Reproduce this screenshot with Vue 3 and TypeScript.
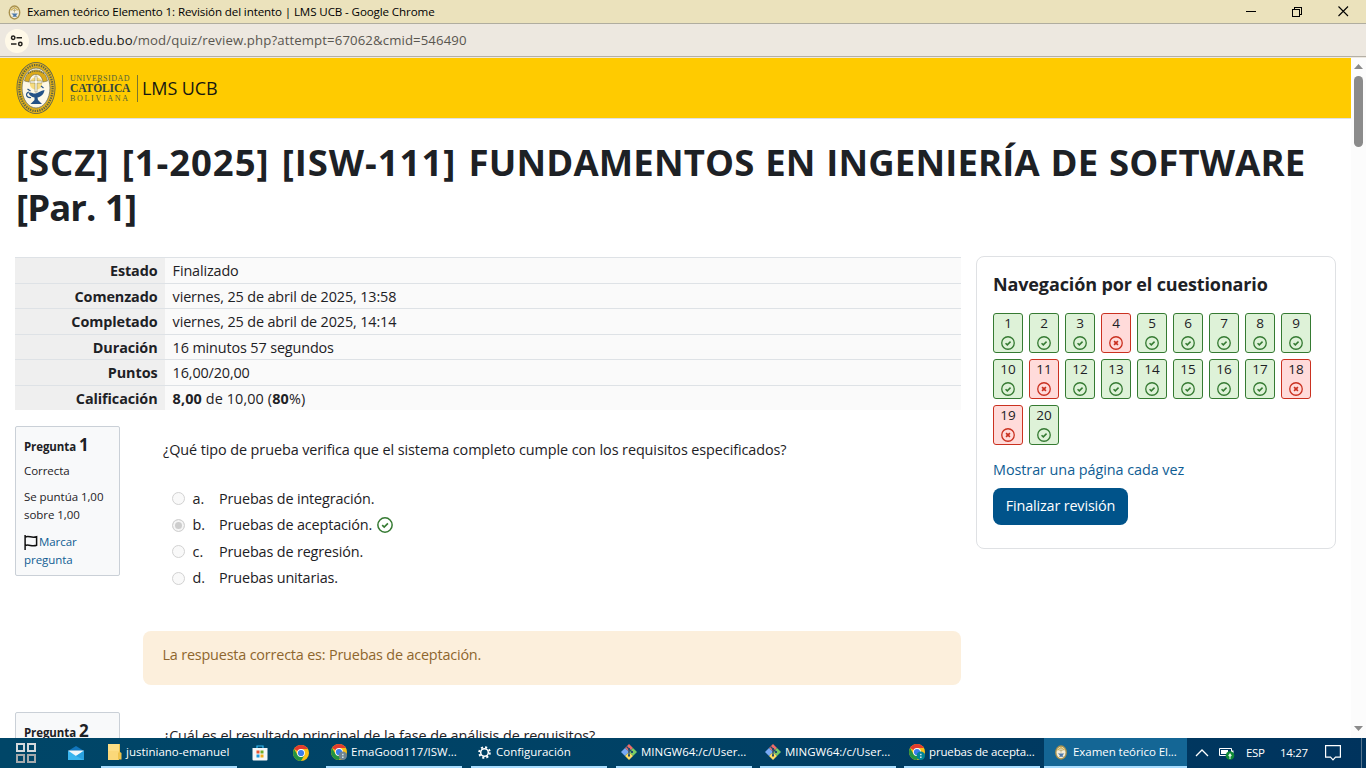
<script setup lang="ts">
interface Row { label: string; value: string; bold?: boolean }
interface Task { kind: string; text?: string }

const rows: Row[] = [
  { label: 'Estado', value: 'Finalizado' },
  { label: 'Comenzado', value: 'viernes, 25 de abril de 2025, 13:58' },
  { label: 'Completado', value: 'viernes, 25 de abril de 2025, 14:14' },
  { label: 'Duración', value: '16 minutos 57 segundos' },
  { label: 'Puntos', value: '16,00/20,00' },
  { label: 'Calificación', value: '', bold: true },
]
const options = [
  { letter: 'a.', text: 'Pruebas de integración.' },
  { letter: 'b.', text: 'Pruebas de aceptación.', checked: true },
  { letter: 'c.', text: 'Pruebas de regresión.' },
  { letter: 'd.', text: 'Pruebas unitarias.' },
]
const wrong = [4, 11, 18, 19]
const tasks: Task[] = [
  { kind: 'view' },
  { kind: 'mail' },
  { kind: 'folder', text: 'justiniano-emanuel' },
  { kind: 'store' },
  { kind: 'chrome' },
  { kind: 'chrome-gray', text: 'EmaGood117/ISW...' },
  { kind: 'gear', text: 'Configuración' },
  { kind: 'git', text: 'MINGW64:/c/User...' },
  { kind: 'git', text: 'MINGW64:/c/User...' },
  { kind: 'chrome-teal', text: 'pruebas de acepta...' },
  { kind: 'seal', text: 'Examen teórico El...' },
]
</script>

<template>
  <div class="screen">
    <svg class="defs" width="0" height="0" aria-hidden="true">
      <symbol id="seal" viewBox="0 0 40 54">
        <ellipse cx="20" cy="27" rx="19.5" ry="26" fill="#596052" />
        <ellipse cx="20" cy="27" rx="18.7" ry="25.2" fill="#e0b01c" />
        <ellipse cx="20" cy="27" rx="16.6" ry="23" fill="none" stroke="#5d6340" stroke-width="2.2" stroke-dasharray="1.3 1.1" />
        <ellipse cx="20" cy="27" rx="14" ry="20" fill="#fdf8e6" stroke="#6c7059" stroke-width=".8" />
        <path d="M8.500 20c1-7 5.500-11 11.500-11s10.500 4 11.500 11l-4.500 1c-1-5-3-7.500-7-7.500s-6 2.500-7 7.500z" fill="#dba91b" stroke="#6b6a49" stroke-width=".6" />
        <path d="M12 12.500c5-3 11-3 16 0" fill="none" stroke="#57614f" stroke-width="1.200" stroke-dasharray="1.200 1" />
        <circle cx="20" cy="22.500" r="6.200" fill="#f8dd80" />
        <path d="M19 15h2v5h5v2h-5v9h-2v-9h-5v-2h5z" fill="#fffdf2" stroke="#7d7a55" stroke-width=".5" />
        <path d="M12.500 32c3-1.500 4 1 7 .5 3-.5 5-3 9-3.500-.500 4.500-4 7-7 7.500l.500 2.500 4 4H14.500l4-4v-2.500c-3-.5-5-2-6-4.500z" fill="#245287" />
        <path d="M13 31c-4 1-3 6 2 5.500M25 25l2.500 2M11.500 28l3 2" fill="none" stroke="#245287" stroke-width="1.200" />
      </symbol>
      <symbol id="seal-mini" viewBox="0 0 12 15">
        <ellipse cx="6" cy="7.500" rx="5.900" ry="7.200" fill="#a9914c" />
        <ellipse cx="6" cy="7.500" rx="4.500" ry="5.800" fill="#f4efdc" />
        <path d="M2.400 5.300L6 2.500l3.500 2.800" stroke="#cfb156" fill="none" stroke-width="1.300" />
        <path d="M6 3.600v4M4.300 5.400h3.500" stroke="#b2a36c" stroke-width=".7" />
        <path d="M2.800 8.500h6.500L7.500 10.300l1.200 1.500H4l1-1.500z" fill="#4d79a9" />
      </symbol>
      <symbol id="check" viewBox="0 0 16 16">
        <circle cx="8" cy="8" r="7.150" fill="none" stroke="currentColor" stroke-width="1.500" />
        <path d="M5.200 8.200l2 1.900 3.700-3.700" fill="none" stroke="currentColor" stroke-width="1.700" />
      </symbol>
      <symbol id="cross" viewBox="0 0 16 16">
        <circle cx="8" cy="8" r="7.150" fill="none" stroke="currentColor" stroke-width="1.500" />
        <path d="M5.800 5.800l4.400 4.400M10.200 5.800l-4.400 4.400" fill="none" stroke="currentColor" stroke-width="1.900" />
      </symbol>
      <symbol id="chrome" viewBox="0 0 16 16">
        <circle cx="8" cy="8" r="8" fill="#fbc116" />
        <path d="M8 8L1.100 4A8 8 0 0 1 14.900 4H8z" fill="#e33b2e" />
        <path d="M8 8L4.500 10 1.100 4A8 8 0 0 0 8 16l3.500-6z" fill="#229342" />
        <circle cx="8" cy="8" r="3.900" fill="#fff" />
        <circle cx="8" cy="8" r="3.100" fill="#3b7ded" />
      </symbol>
    </svg>

    <header class="titlebar">
      <svg class="tab-seal" width="13" height="15"><use href="#seal-mini" /></svg>
      <span class="window-title">Examen teórico Elemento 1: Revisión del intento | LMS UCB - Google Chrome</span>
      <svg class="window-buttons" width="110" height="20" viewBox="0 0 110 20" fill="none" stroke="#000" shape-rendering="crispEdges">
        <path d="M0 9.500h10M46.500 7.500h7v7h-7zM48.500 7V5.500h7v7H54" />
        <path d="M92.500 4.500l9.500 9.500M102 4.500L92.500 14" shape-rendering="auto" stroke-width="1.100" />
      </svg>
    </header>

    <div class="urlbar">
      <span class="site-info">
        <svg width="14" height="12" viewBox="0 0 14 12" fill="none" stroke="#24221d" stroke-width="1.500">
          <circle cx="3.200" cy="2.800" r="1.700" /><path d="M6.500 2.800H12M1 9h5.500" /><circle cx="10.300" cy="9" r="1.700" />
        </svg>
      </span>
      <span class="url"><b>lms.ucb.edu.bo</b>/mod/quiz/review.php?attempt=67062&amp;cmid=546490</span>
    </div>

    <div class="viewport">
      <main class="page">
        <nav class="brandbar">
          <svg class="brand-seal" width="40" height="54"><use href="#seal" /></svg>
          <div class="brand-words">
            <span class="w1">UNIVERSIDAD</span>
            <span class="w2">CATÓLICA</span>
            <span class="w3">BOLIVIANA</span>
          </div>
          <span class="brand-name">LMS UCB</span>
        </nav>

        <h1>
          <span class="codes">[SCZ] [1-2025] [ISW-111] </span>FUNDAMENTOS EN INGENIERÍA DE SOFTWARE<br><span class="parallel">[Par. 1]</span>
        </h1>

        <div class="columns">
          <section class="main-col">
            <div class="summary">
              <div v-for="r in rows" :key="r.label" class="row">
                <div class="th">{{ r.label }}</div>
                <div class="td" :class="{ total: r.bold }">
                  <template v-if="r.bold"><b>8,00</b> de 10,00 (<b>80</b>%)</template>
                  <template v-else>{{ r.value }}</template>
                </div>
              </div>
            </div>

            <article class="question">
              <aside class="info">
                <h3>Pregunta <em>1</em></h3>
                <p class="state">Correcta</p>
                <p class="grade">Se puntúa 1,00<br>sobre 1,00</p>
                <p class="flag">
                  <svg width="14" height="15" viewBox="0 0 14 15" fill="none" stroke="#111" stroke-width="1.500"><path d="M1.100 0v15M1.100 2c4-2 6 1.500 11.500-.3v8.600c-5 2-7.500-1.700-11.500.2" /></svg>
                  Marcar<br>pregunta
                </p>
              </aside>
              <div class="content">
                <div class="formulation">
                  <p class="qtext">¿Qué tipo de prueba verifica que el sistema completo cumple con los requisitos especificados?</p>
                  <div v-for="o in options" :key="o.letter" class="option">
                    <i class="radio" :class="{ on: o.checked }"></i>
                    <span class="letter">{{ o.letter }}</span>
                    <span class="answer">{{ o.text }}</span>
                    <svg v-if="o.checked" class="ok" width="16" height="16"><use href="#check" /></svg>
                  </div>
                </div>
                <div class="feedback">La respuesta correcta es: Pruebas de aceptación.</div>
              </div>
            </article>

            <article class="question second">
              <aside class="info"><h3>Pregunta <em>2</em></h3></aside>
              <div class="content">
                <div class="formulation"><p class="qtext">¿Cuál es el resultado principal de la fase de análisis de requisitos?</p></div>
              </div>
            </article>
          </section>

          <aside class="quiz-nav">
            <h2>Navegación por el cuestionario</h2>
            <div class="grid">
              <div v-for="n in 20" :key="n" class="qbtn" :class="{ bad: wrong.includes(n) }">
                <span>{{ n }}</span>
                <svg width="14" height="14" viewBox="0 0 16 16"><use :href="wrong.includes(n) ? '#cross' : '#check'" /></svg>
              </div>
            </div>
            <a class="show-one">Mostrar una página cada vez</a>
            <button class="finish">Finalizar revisión</button>
          </aside>
        </div>
      </main>
      <div class="scrollbar">
        <svg width="9" height="5"><path d="M0 5h9L4.500 0z" fill="#8b8b8b" /></svg>
        <i class="thumb"></i>
        <svg class="down" width="9" height="5"><path d="M0 0h9L4.500 5z" fill="#8b8b8b" /></svg>
      </div>
    </div>

    <footer class="taskbar">
      <div v-for="(t, i) in tasks" :key="i" class="task" :class="[t.kind, { open: t.text }]">
        <svg v-if="t.kind === 'view'" width="20" height="20" viewBox="0 0 20 20" fill="none" stroke-width="2" shape-rendering="crispEdges">
          <path d="M1 1h7v7H1zM12 1h7v7h-7z" stroke="#d5d9dc" /><path d="M1 12h7v7H1zM12 12h7v7h-7z" stroke="#a5a9ac" />
        </svg>
        <svg v-else-if="t.kind === 'mail'" width="16" height="16" viewBox="0 0 16 16">
          <path d="M0 6l8-5 8 5v9H0z" fill="#1176bd" /><path d="M0 6h16v9H0z" fill="#3ab5ee" /><path d="M0 5.500h16L8 11z" fill="#f2f7fa" /><path d="M8 11l8-5v9z" fill="#2aa1df" />
        </svg>
        <svg v-else-if="t.kind === 'folder'" width="14" height="16" viewBox="0 0 14 16">
          <path d="M0 0h11v16H0z" fill="#fbd879" /><path d="M11 0h1v8l1.500 1v6.500H10V9l1-1z" fill="#efc34d" /><path d="M0 0h11v7H0z" fill="#ffe28f" opacity=".6" />
        </svg>
        <svg v-else-if="t.kind === 'store'" width="16" height="16" viewBox="0 0 16 16">
          <path d="M5 3V1h6v2" fill="none" stroke="#35b9f1" stroke-width="1.200" /><path d="M.5 3h15v11.500q0 1-1 1h-13q-1 0-1-1z" fill="#f5f7f8" />
          <path d="M4.500 5.500h3v3h-3z" fill="#e65332" /><path d="M8.500 5.500h3v3h-3z" fill="#6fad25" /><path d="M4.500 9.500h3v3h-3z" fill="#1c98dd" /><path d="M8.500 9.500h3v3h-3z" fill="#f3ad1a" />
        </svg>
        <svg v-else-if="t.kind.startsWith('chrome')" width="16" height="16" viewBox="0 0 16 16">
          <use href="#chrome" />
          <g v-if="t.kind !== 'chrome'">
            <circle cx="11.800" cy="11.800" r="4.200" :fill="t.kind === 'chrome-gray' ? '#71838f' : '#008397'" />
            <path d="M11 9.800h1.600v1.400H11zM11 12.500h1.600v1.400H11z" fill="#c8e0e7" />
          </g>
        </svg>
        <svg v-else-if="t.kind === 'gear'" width="13" height="13" viewBox="0 0 13 13" fill="none" stroke="#fff">
          <circle cx="6.500" cy="6.500" r="3.800" stroke-width="1.500" />
          <circle cx="6.500" cy="6.500" r="5.300" stroke-width="2" stroke-dasharray="2.080 2.080" />
        </svg>
        <svg v-else-if="t.kind === 'git'" width="16" height="16" viewBox="0 0 16 16">
          <path d="M8 0l4 4-4 4-4-4z" fill="#ef6c68" /><path d="M4 4l4 4-4 4-4-4z" fill="#78a9f4" /><path d="M12 4l4 4-4 4-4-4z" fill="#79cb63" /><path d="M8 8l4 4-4 4-4-4z" fill="#ffdc61" />
          <path d="M5.500 2.500l5 5M8 5v7" stroke="#214c70" stroke-width="1.300" /><path d="M7 4h2v2H7zM7 10.500h2v2H7zM10 7h2v2h-2z" fill="#214c70" />
        </svg>
        <svg v-else width="12" height="15"><use href="#seal-mini" /></svg>
        <span v-if="t.text">{{ t.text }}</span>
      </div>
      <div class="tray"><svg width="14" height="8" viewBox="0 0 14 8" fill="none" stroke="#fff" stroke-width="1.300"><path d="M1 7l6-6 6 6" /></svg></div>
      <div class="tray battery">
        <svg width="16" height="13" viewBox="0 0 16 13"><path d="M.5 1.500h12v7H.5z" fill="none" stroke="#fff" /><path d="M2 3h7v4H2zM13 3.500h1.500v3H13z" fill="#fff" /><circle cx="11" cy="8.500" r="4.300" fill="#0e8b35" /><path d="M11 6l1.800 2.500L11 10.300 9.200 8.500zM10.500 10h1v2h-1z" fill="#e4f7e8" /></svg>
      </div>
      <div class="tray esp">ESP</div>
      <div class="tray clock">14:27</div>
      <div class="tray note"><svg width="16" height="16" viewBox="0 0 16 16" fill="none" stroke="#fff" stroke-width="1.200"><path d="M.6.600h14.800v11.600H10.500L8 14.800 5.500 12.200H.6z" /></svg></div>
      <div class="desktop-edge"></div>
    </footer>
  </div>
</template>

<style>
body { margin: 0; overflow: hidden; }
</style>

<style scoped>
* { box-sizing: border-box; }
.screen { width: 1366px; height: 768px; display: flex; flex-direction: column; overflow: hidden; background: #fff; color: #1d2125; font: 14.4px/22.5px "Segoe UI", "Open Sans", "Noto Sans", sans-serif; white-space: nowrap; }
.defs { position: absolute; }
h1, h2, h3, p { margin: 0; }
.titlebar { height: 24px; flex: none; display: flex; align-items: center; background: #ebe2bc; border-bottom: 1px solid #b0ad9f; padding: 1px 0 0 8px; color: #000; }
.window-title { margin-left: 6px; font-size: 11.6px; letter-spacing: -.12px; }
.window-buttons { margin: -1px 10px 0 auto; }
.urlbar { height: 34px; flex: none; display: flex; align-items: center; background: #ede8e0; border-bottom: 1px solid #ede8e0; box-shadow: inset 0 -1px #b4afa5; padding-left: 5px; color: #59564f; }
.site-info { width: 24px; height: 24px; border-radius: 50%; background: #fff9e8; display: flex; align-items: center; justify-content: center; }
.url { margin-left: 8px; font-size: 13.2px; letter-spacing: .11px; }
.url b { font-weight: 400; color: #171612; }
.viewport { flex: 1; min-height: 0; display: flex; }
.page { width: 1351px; overflow: hidden; }
.brandbar { height: 61px; background: #ffcb00; border-bottom: 1px solid #dee2e6; display: flex; align-items: center; padding-left: 15px; }
.brand-seal { flex: none; margin: 0 -1px 1px 1px; }
.brand-words { margin-left: 7px; width: 76px; height: 27px; padding-left: 7px; border-left: 1px solid #9b8e33; border-right: 1px solid #7b762f; display: flex; flex-direction: column; justify-content: space-between; font-family: "Liberation Serif", serif; color: #52613d; }
.brand-words span { line-height: 7px; }
.w1 { font-size: 8px; letter-spacing: .48px; }
.brand-words .w2 { font-size: 11.5px; line-height: 9px; font-weight: 700; color: #30463f; letter-spacing: -.1px; }
.w3 { font-size: 8px; letter-spacing: 1.7px; }
.brand-name { margin-left: 4px; font-size: 18px; letter-spacing: -.1px; color: #161811; }
h1 { margin: 21px 0 0 16px; font-size: 36.5px; line-height: 45px; font-weight: 700; letter-spacing: .15px; word-spacing: 1px; }
.codes { letter-spacing: .95px; word-spacing: 1.8px; }
.parallel { letter-spacing: -.9px; }
.columns { display: flex; align-items: flex-start; margin: 26px 0 0 15px; }
.main-col { width: 946px; }
.summary { margin-top: 1px; }
.row { display: flex; height: 25.500px; border-top: 1px solid #dee2e6; }
.th { width: 150px; padding: 2px 7.500px 0; text-align: right; font-weight: 700; background: #efefef; letter-spacing: -.1px; }
.td { flex: 1; padding: 2px 8px 0 7.600px; background: #fafafa; letter-spacing: -.13px; }
.td.total { letter-spacing: .12px; }
.question { display: flex; margin-top: 16px; }
.info { width: 105px; height: 150px; flex: none; border: 1px solid #cad0d7; border-radius: 2px; background: #f8f9fa; padding: 7px 0 0 8px; font-size: 11.500px; line-height: 18px; letter-spacing: -.05px; }
h3 { font-size: 11.500px; line-height: 22px; height: 23px; font-weight: 700; letter-spacing: -.1px; }
h3 em { font-style: normal; font-size: 17px; }
.state { margin-top: 5px; }
.grade { margin-top: 8px; }
.flag { margin-top: 9px; color: #0f5d93; }
.flag svg { vertical-align: -4px; margin-right: -2px; }
.content { width: 818px; margin-left: 23px; }
.formulation { height: 188px; padding: 13px 0 0 20px; }
.qtext { margin-bottom: 24px; letter-spacing: -.078px; }
.option { display: flex; align-items: center; height: 26.600px; }
.radio { width: 13px; height: 13px; margin-left: 8.500px; border: 1px solid #d2d2d2; border-radius: 50%; background: #f9f9f9; }
.radio.on { box-shadow: inset 0 0 0 2px #f5f5f5; background: #cdcdcd; }
.letter { width: 26.500px; margin-left: 8px; }
.answer { letter-spacing: -.14px; }
.ok { margin-left: 5px; color: #357a32; }
.feedback { margin-top: 17px; height: 54px; border-radius: 8px; padding: 13px 19.500px; background: #fcefdc; color: #8e662e; letter-spacing: -.18px; }
.second { margin-top: 27px; }
.quiz-nav { width: 360px; height: 293px; margin-left: 15px; border: 1px solid #dfe1e4; border-radius: 8px; padding: 16px; display: flex; flex-direction: column; align-items: flex-start; }
h2 { font-size: 18px; line-height: 23px; font-weight: 700; letter-spacing: -.13px; }
.grid { display: grid; grid-template-columns: repeat(9, 30px); gap: 6px; margin-top: 17px; }
.qbtn { height: 40px; border: 1px solid #357a32; border-radius: 3px; background: #def2d8; text-align: center; font-size: 13.500px; line-height: 19px; display: flex; flex-direction: column; align-items: center; }
.qbtn svg { margin-top: 3px; color: #357a32; }
.qbtn.bad { border-color: #ca3120; background: #ffdbda; }
.qbtn.bad svg { color: #ca3120; }
.show-one { margin-top: 14px; color: #0f5d93; letter-spacing: -.06px; }
.finish { margin-top: 6px; width: 135px; height: 37px; padding: 0; border: 0; border-radius: 8px; background: #00538a; color: #fff; font: inherit; letter-spacing: -.15px; }
.scrollbar { width: 15px; background: #fcfcfc; display: flex; flex-direction: column; align-items: center; padding: 6px 0 7px; }
.thumb { width: 9px; height: 71px; margin-top: 7px; border-radius: 5px; background: #8b8b8b; }
.down { margin-top: auto; }
.taskbar { height: 30px; flex: none; display: grid; grid-template-columns: 52px 49px 143px 40px 42px 145px 145px 144px 144px 140px 143px 28px 27px 34px 41px 44px 5px; background: linear-gradient(90deg, #004668, #004165 50%, #00335d); color: #fff; font-size: 11.500px; }
.task { display: flex; align-items: center; height: 30px; }
.task svg { flex: none; }
.task.open { width: 136px; padding-left: 5px; border-bottom: 2px solid #a8ddff; }
.task.open span { margin-left: 4px; }
.task.view { padding-left: 16px; }
.task.mail { padding-left: 16px; }
.task.folder { padding-left: 7px; }
.task.store { padding-left: 8px; }
.task.chrome { padding-left: 9px; }
.task.gear { padding-left: 7px; }
.task.gear span { margin-left: 5px; }
.task.chrome-teal span { letter-spacing: -.15px; }
.task.seal { width: 143px; padding-left: 11px; background: #146695; }
.task.seal span { margin-left: 6px; letter-spacing: -.05px; }
.tray { display: flex; align-items: center; padding-left: 8px; }
.battery { padding-left: 4px; }
.esp { padding-left: 4px; letter-spacing: -.3px; }
.clock { padding-left: 4px; letter-spacing: -.3px; }
.note { padding-left: 8px; }
.desktop-edge { border-left: 1px solid #56758f; }
</style>
